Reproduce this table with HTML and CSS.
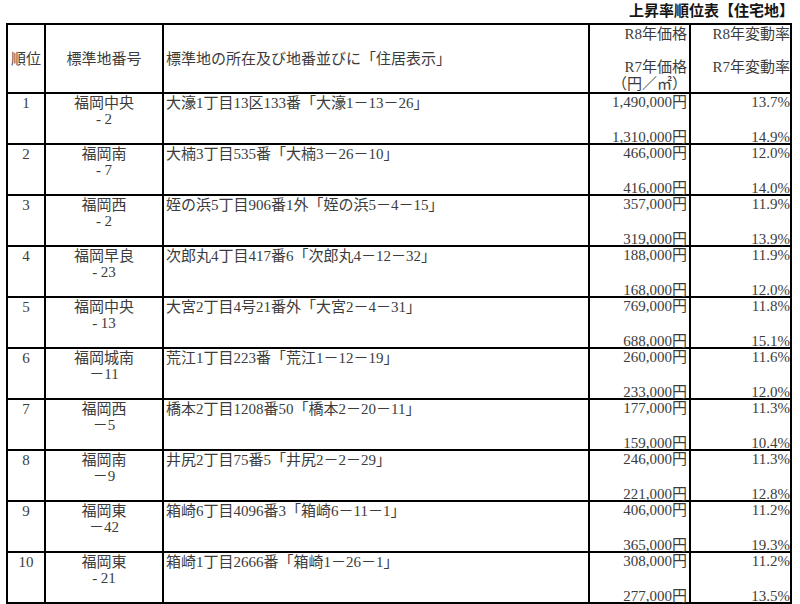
FILE: index.html
```html
<!DOCTYPE html>
<html lang="ja">
<head>
<meta charset="utf-8">
<title>上昇率順位表【住宅地】</title>
<link rel="stylesheet" href="styles.css">
</head>
<body>
<div class="title">上昇率順位表【住宅地】</div>
<table class="rank-table">
  <colgroup>
    <col class="c-rank"><col class="c-code"><col class="c-addr"><col class="c-price"><col class="c-rate">
  </colgroup>
  <thead>
    <tr class="head">
      <th class="h-mid center">順位</th>
      <th class="h-mid center">標準地番号</th>
      <th class="h-mid left">標準地の所在及び地番並びに「住居表示」</th>
      <th class="h-top price">R8年価格<br><br>R7年価格<br>（円／㎡）</th>
      <th class="h-top rate">R8年変動率<br><br>R7年変動率</th>
    </tr>
  </thead>
  <tbody>
    <tr><td class="center">1</td><td class="center">福岡中央<br>- 2</td><td class="addr">大濠1丁目13区133番「大濠1－13－26」</td><td class="price"><div class="pair"><span>1,490,000円</span><span class="low">1,310,000円</span></div></td><td class="rate"><div class="pair"><span>13.7%</span><span class="low">14.9%</span></div></td></tr>
    <tr><td class="center">2</td><td class="center">福岡南<br>- 7</td><td class="addr">大楠3丁目535番「大楠3－26－10」</td><td class="price"><div class="pair"><span>466,000円</span><span class="low">416,000円</span></div></td><td class="rate"><div class="pair"><span>12.0%</span><span class="low">14.0%</span></div></td></tr>
    <tr><td class="center">3</td><td class="center">福岡西<br>- 2</td><td class="addr">姪の浜5丁目906番1外「姪の浜5－4－15」</td><td class="price"><div class="pair"><span>357,000円</span><span class="low">319,000円</span></div></td><td class="rate"><div class="pair"><span>11.9%</span><span class="low">13.9%</span></div></td></tr>
    <tr><td class="center">4</td><td class="center">福岡早良<br>- 23</td><td class="addr">次郎丸4丁目417番6「次郎丸4－12－32」</td><td class="price"><div class="pair"><span>188,000円</span><span class="low">168,000円</span></div></td><td class="rate"><div class="pair"><span>11.9%</span><span class="low">12.0%</span></div></td></tr>
    <tr><td class="center">5</td><td class="center">福岡中央<br>- 13</td><td class="addr">大宮2丁目4号21番外「大宮2－4－31」</td><td class="price"><div class="pair"><span>769,000円</span><span class="low">688,000円</span></div></td><td class="rate"><div class="pair"><span>11.8%</span><span class="low">15.1%</span></div></td></tr>
    <tr><td class="center">6</td><td class="center">福岡城南<br>－11</td><td class="addr">荒江1丁目223番「荒江1－12－19」</td><td class="price"><div class="pair"><span>260,000円</span><span class="low">233,000円</span></div></td><td class="rate"><div class="pair"><span>11.6%</span><span class="low">12.0%</span></div></td></tr>
    <tr><td class="center">7</td><td class="center">福岡西<br>－5</td><td class="addr">橋本2丁目1208番50「橋本2－20－11」</td><td class="price"><div class="pair"><span>177,000円</span><span class="low">159,000円</span></div></td><td class="rate"><div class="pair"><span>11.3%</span><span class="low">10.4%</span></div></td></tr>
    <tr><td class="center">8</td><td class="center">福岡南<br>－9</td><td class="addr">井尻2丁目75番5「井尻2－2－29」</td><td class="price"><div class="pair"><span>246,000円</span><span class="low">221,000円</span></div></td><td class="rate"><div class="pair"><span>11.3%</span><span class="low">12.8%</span></div></td></tr>
    <tr><td class="center">9</td><td class="center">福岡東<br>－42</td><td class="addr">箱崎6丁目4096番3「箱崎6－11－1」</td><td class="price"><div class="pair"><span>406,000円</span><span class="low">365,000円</span></div></td><td class="rate"><div class="pair"><span>11.2%</span><span class="low">19.3%</span></div></td></tr>
    <tr><td class="center">10</td><td class="center">福岡東<br>- 21</td><td class="addr">箱崎1丁目2666番「箱崎1－26－1」</td><td class="price"><div class="pair"><span>308,000円</span><span class="low">277,000円</span></div></td><td class="rate"><div class="pair"><span>11.2%</span><span class="low">13.5%</span></div></td></tr>
  </tbody>
</table>
</body>
</html>
```
FILE: styles.css
```css
html, body {
  margin: 0;
  padding: 0;
  background: #ffffff;
}

body {
  font-family: "Liberation Serif", "Noto Sans CJK JP", serif;
  color: #3c3c3c;
}

.title {
  height: 23px;
  line-height: 20px;
  padding-right: 6px;
  text-align: right;
  font-family: "Noto Sans CJK JP", sans-serif;
  font-weight: 700;
  font-size: 15px;
  color: #151515;
}

.rank-table {
  border-collapse: collapse;
  table-layout: fixed;
  width: 786px;
  margin-left: 6px;
}

.c-rank { width: 38px; }
.c-code { width: 118px; }
.c-addr { width: 426px; }
.c-price { width: 101px; }
.c-rate { width: 101px; }

.rank-table th,
.rank-table td {
  border: 2px solid #000000;
  padding: 0;
  font-size: 15px;
  line-height: 16px;
  font-weight: 400;
  vertical-align: top;
  white-space: nowrap;
  overflow: visible;
}

.head {
  height: 68px;
}

.rank-table tbody tr {
  height: 51px;
}

.h-mid {
  vertical-align: middle !important;
}

.h-top {
  line-height: 16.5px !important;
  padding-top: 1px !important;
}

.center {
  text-align: center;
}

.left {
  text-align: left;
  padding-left: 2px !important;
}

.rank-table td.center {
  padding-top: 1px;
}

.addr {
  text-align: left;
  padding-left: 2px !important;
  padding-top: 1px !important;
}

.price {
  text-align: right;
  padding-right: 2px !important;
}

.rate {
  text-align: right;
  padding-right: 0 !important;
}

.pair {
  height: 49px;
  display: flex;
  flex-direction: column;
  justify-content: space-between;
}

.pair .low {
  line-height: 12px;
}
```
